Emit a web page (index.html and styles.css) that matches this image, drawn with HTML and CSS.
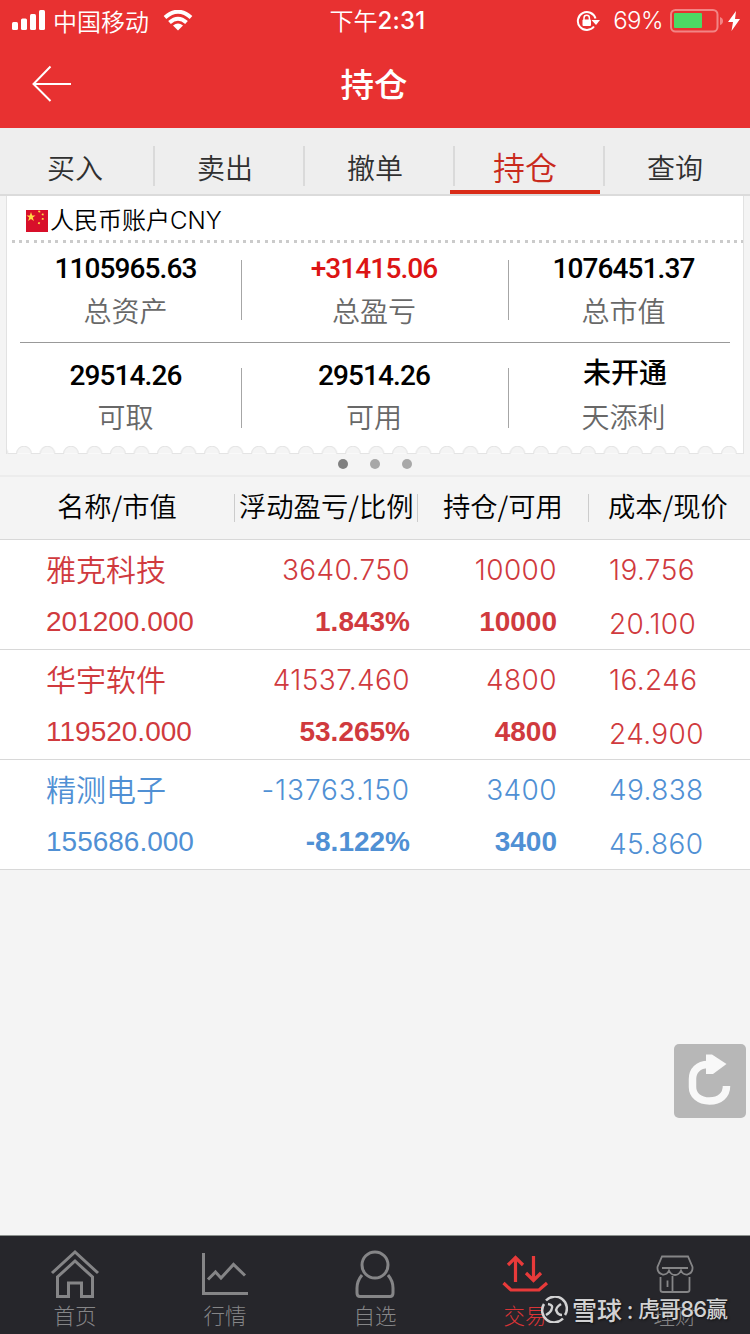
FILE: index.html
```html
<!DOCTYPE html>
<html lang="zh-CN">
<head>
<meta charset="utf-8">
<title>持仓</title>
<link rel="stylesheet" href="styles.css">
</head>
<body>
<div class="app">
  <header class="top">
    <div class="status">
      <div class="status-left">
        <svg width="34" height="22" viewBox="0 0 34 22" fill="#fff"><rect x="0" y="12" width="6" height="8" rx="1.5"/><rect x="9" y="8.500" width="6" height="11.500" rx="1.500"/><rect x="18" y="4" width="6" height="16" rx="1.500"/><rect x="27" y="0" width="6" height="20" rx="1.500"/></svg>
        <span class="carrier">中国移动</span>
        <svg width="30" height="22" viewBox="0 0 30 22"><g fill="none" stroke="#fff" stroke-width="4"><path d="M2 7.500Q15-4 28 7.500"/><path d="M6.500 12.500Q15 5 23.500 12.500"/></g><path d="M10 15.500Q15 11.500 20 15.500L15 20.500Z" fill="#fff"/></svg>
      </div>
      <div class="clock">下午<b>2:31</b></div>
      <div class="status-right">
        <svg width="24" height="22" viewBox="0 0 24 22"><path d="M18 16.500A9 9 0 1 1 19.500 8.500" fill="none" stroke="#fff" stroke-width="2"/><path d="M15.500 10H24L20 15Z" fill="#fff"/><rect x="6.500" y="9.500" width="8.500" height="6.500" rx="1" fill="#fff"/><path d="M8 10V8a2.700 2.700 0 0 1 5.400 0v2" fill="none" stroke="#fff" stroke-width="1.500"/></svg>
        <span class="percent">69%</span>
        <svg width="54" height="24" viewBox="0 0 54 24"><rect x="1" y="1" width="46.500" height="21.500" rx="4.500" fill="none" stroke="#f28585" stroke-width="2"/><rect x="4" y="4" width="28" height="15" rx="1" fill="#4cd964"/><path d="M50 8q3 1 3 4t-3 4z" fill="#f28585"/></svg>
        <svg class="bolt" width="12" height="20" viewBox="0 0 12 20"><path d="M8 0L0 11H5L3.500 20L12 8H7Z" fill="#fff"/></svg>
      </div>
    </div>
    <div class="title-bar">
      <svg class="back" width="40" height="38" viewBox="0 0 40 38"><path d="M18.500 1.500L1.500 19L18.500 36M1.500 19H39" fill="none" stroke="#fff" stroke-width="2"/></svg>
      <h1>持仓</h1>
    </div>
  </header>

  <nav class="tabs">
    <a class="tab"><span>买入</span></a>
    <a class="tab"><span>卖出</span></a>
    <a class="tab"><span>撤单</span></a>
    <a class="tab active"><span>持仓</span></a>
    <a class="tab"><span>查询</span></a>
  </nav>

  <section class="account">
    <div class="card">
      <div class="account-name">
        <svg width="22" height="22" viewBox="0 0 22 22"><rect width="22" height="22" fill="#d80f2a"/><path fill="#ffda44" d="M5 2L6.200 5.500H9.500L6.800 7.600L7.900 11L5 9L2.100 11L3.200 7.600L.5 5.500H3.800ZM12.500.5l1.500.2.500 1.500-1.500.3-1-.9zM16 3.500l1.800.2-.4 1.800-1.800-.4zM16 8l1.800.2-.4 1.900-1.800-.5zM12.500 12l1.700.5-.7 1.800-1.700-.5z"/></svg>
        <span>人民币账户CNY</span>
      </div>
      <div class="dots-line"></div>
      <div class="stats">
        <div class="stat first"><div class="num">1105965.63</div><div class="label">总资产</div></div>
        <div class="stat middle"><div class="num gain">+31415.06</div><div class="label">总盈亏</div></div>
        <div class="stat last"><div class="num">1076451.37</div><div class="label">总市值</div></div>
      </div>
      <div class="stats lower">
        <div class="stat first"><div class="num">29514.26</div><div class="label">可取</div></div>
        <div class="stat middle"><div class="num">29514.26</div><div class="label">可用</div></div>
        <div class="stat last"><div class="num cjk">未开通</div><div class="label">天添利</div></div>
      </div>
      <svg class="scallops" width="736" height="8" viewBox="0 0 736 8"><defs><pattern id="scallop" x="5.200" width="23.500" height="8" patternUnits="userSpaceOnUse"><path d="M0 7.500H4.500A7.200 7.200 0 0 1 19 7.500H23.500" fill="#f4f4f4" stroke="#e4e4e4"/></pattern></defs><rect width="736" height="8" fill="url(#scallop)"/></svg>
    </div>
    <div class="pager"><i class="on"></i><i></i><i></i></div>
  </section>

  <section class="holdings">
    <div class="head">
      <span class="h1c">名称/市值</span><span class="h2c">浮动盈亏/比例</span><span class="h3c">持仓/可用</span><span class="h4c">成本/现价</span>
    </div>
    <div class="row up">
      <div class="c1"><span class="name">雅克科技</span><span class="helv">201200.000</span></div>
      <div class="c2"><span class="thin">3640.750</span><b>1.843%</b></div>
      <div class="c3"><span class="thin">10000</span><b>10000</b></div>
      <div class="c4"><span class="thin">19.756</span><span class="thin second">20.100</span></div>
    </div>
    <div class="row up">
      <div class="c1"><span class="name">华宇软件</span><span class="helv">119520.000</span></div>
      <div class="c2"><span class="thin">41537.460</span><b>53.265%</b></div>
      <div class="c3"><span class="thin">4800</span><b>4800</b></div>
      <div class="c4"><span class="thin">16.246</span><span class="thin second">24.900</span></div>
    </div>
    <div class="row down">
      <div class="c1"><span class="name">精测电子</span><span class="helv">155686.000</span></div>
      <div class="c2"><span class="thin wide">-13763.150</span><b>-8.122%</b></div>
      <div class="c3"><span class="thin">3400</span><b>3400</b></div>
      <div class="c4"><span class="thin">49.838</span><span class="thin second">45.860</span></div>
    </div>
  </section>

  <button class="refresh" aria-label="刷新">
    <svg width="72" height="74" viewBox="0 0 72 74"><path d="M34 20.500C24 20.500 18.500 27 18.500 35V43C18.500 51 25 57 35.500 57C46 57 52.500 51 52.500 42" fill="none" stroke="#f8f8f8" stroke-width="7.500"/><path d="M32 10.500H38L52.500 20L39 30H32Z" fill="#f8f8f8"/></svg>
  </button>

  <nav class="bottom">
    <a class="item"><svg width="50" height="50" viewBox="0 0 50 50"><g fill="none" stroke="#858587" stroke-width="3"><path d="M2 24L25 3L48 24"/><path d="M7.500 47.500V28L25 12L42.500 28V47.500H31.500V34H18.500V47.500Z"/></g></svg><span>首页</span></a>
    <a class="item"><svg width="50" height="50" viewBox="0 0 50 50"><g fill="none" stroke="#858587" stroke-width="3"><path d="M3.500 4V44.500H48"/><path d="M8 30.500L15.500 23L21 29L33.500 15.500L45 26.500"/></g></svg><span>行情</span></a>
    <a class="item"><svg width="50" height="50" viewBox="0 0 50 50"><g fill="none" stroke="#858587" stroke-width="3"><circle cx="25" cy="16" r="13"/><path d="M12 26Q7 32 7 39V44Q7 47.500 10 47.500H40Q43 47.500 43 44V39Q43 32 38 26"/></g></svg><span>自选</span></a>
    <a class="item current"><svg width="50" height="50" viewBox="0 0 50 50"><g fill="none" stroke="#e83a3a" stroke-width="3.200"><path d="M15.500 33V8M8 16L15.500 8.500L23 16M33.500 7V32M26 24L33.500 31.500L41 24"/><path d="M3.500 34L11 41H39L47 34"/></g></svg><span>交易</span></a>
    <a class="item"><svg width="50" height="50" viewBox="0 0 50 50"><g fill="none" stroke="#858587" stroke-width="1.800"><path d="M12 7.500H38L42.500 18Q43 24 37.500 25.500Q33 26 31 21.500Q29 26 25 26Q21 26 19 21.500Q17 26 12.500 25.500Q7 24 7.500 18ZM12 19H38M10.500 28V41Q10.500 43 13 43H37Q39.500 43 39.500 41V28M22.500 27V43M17.500 31.500V38"/></g></svg><span>理财</span></a>
  </nav>

  <div class="watermark">
    <svg width="27" height="27" viewBox="0 0 27 27"><g fill="none" stroke="#d2d2d3" stroke-width="2.500"><path d="M5 4.500A12 12 0 0 1 24 19M22 22.500A12 12 0 0 1 3 8"/><path d="M7 8Q13 9 10.500 13.500Q10 16 5 19M20 8Q14 12 15.500 15Q17 19 21 19"/></g></svg>
    <span class="brand">雪球</span><span class="colon">:</span><span class="author">虎哥86赢</span>
  </div>
</div>
</body>
</html>
```
FILE: styles.css
```css
* { box-sizing: border-box; }
body { margin: 0; background: #f4f4f4; font-family: "Noto Sans CJK SC", sans-serif; }
svg { display: block; flex: none; }
.app { position: relative; width: 750px; height: 1334px; display: flex; flex-direction: column; overflow: hidden; }

.top { height: 128px; background: #e83131; color: #fff; flex: none; }
.status { display: grid; grid-template-columns: 1fr auto 1fr; height: 40px; align-items: center; font-size: 24px; font-weight: 350; padding: 0 10px 0 12px; line-height: 38px; }
.status-left, .status-right { display: flex; align-items: center; }
.carrier { margin: 0 14px 0 7px; }
.clock { padding-left: 3px; display: flex; }
.clock b { font: 500 24px/40px Inter, sans-serif; letter-spacing: .2px; }
.status-right { justify-content: flex-end; }
.percent { font: 350 24px/40px Inter, sans-serif; margin: 1px 7px 0 13px; letter-spacing: -.5px; }
.bolt { margin-left: 4px; }
.title-bar { height: 88px; display: grid; grid-template-columns: 100px 1fr 100px; align-items: center; }
.back { margin-left: 32px; }
.title-bar h1 { margin: -2px 2px 0 0; font-size: 33.5px; line-height: 48px; font-weight: 500; text-align: center; }

.tabs { display: grid; grid-template-columns: repeat(5, 1fr); height: 68px; flex: none; background: #eee; border-bottom: 2px solid #dbdbdb; }
.tab { display: flex; align-items: center; height: 66px; padding: 12px 0 0; font-size: 28px; font-weight: 350; color: #303030; line-height: 50px; justify-content: center; }
.tab:not(:first-child) { background: linear-gradient(#dadada, #dadada) 3px 18px / 2px 40px no-repeat; }
.tab.active { border-bottom: 4px solid #d92c18; color: #c92a1d; font-size: 32px; padding-top: 14px; }

.account { height: 281px; flex: none; border-bottom: 2px solid #ececec; }
.card { width: 738px; height: 258px; margin: 0 auto; background: #fff; border: 1px solid #e2e2e2; border-width: 0 1px; display: flex; flex-direction: column; }
.account-name { height: 44px; display: flex; align-items: center; padding: 5px 0 0 19px; gap: 2px; font-size: 24px; line-height: 36px; color: #000; }
.account-name span { font-family: Inter, "Noto Sans CJK SC", sans-serif; font-weight: 350; }
.dots-line { height: 3px; margin: 0 0 0 5px; background: repeating-linear-gradient(90deg, #cbcbcb 0 3px, #fff 3px 7.220px); flex: none; }
.stats { margin: 17px 13px 0; height: 83px; display: flex; border-bottom: 1px solid #999; flex: none; }
.stats.lower { margin-top: 25px; height: 60px; border: 0; }
.stat { height: 60px; text-align: center; }
.first { width: 222px; padding-right: 10px; border-right: 1px solid #a6a6a6; }
.middle { width: 267px; border-right: 1px solid #a6a6a6; padding-right: 2px; }
.last { flex: 1; padding-left: 8px; }
.num { height: 16px; line-height: 18px; font-family: Roboto, sans-serif; font-weight: 500; font-size: 28px; letter-spacing: -.9px; color: #000; }
.num.gain { color: #dc1414; }
.num.cjk { font-family: "Noto Sans CJK SC", sans-serif; letter-spacing: 0; line-height: 6px; padding-left: 3px; }
.label { margin-top: 26px; height: 18px; line-height: 16px; font-size: 28px; font-weight: 350; color: #686868; }
.lower .num { height: 14px; line-height: 15px; }
.lower .num.cjk { line-height: 7px; }
.scallops { margin: auto 0 0; }
.pager { display: flex; justify-content: center; gap: 22px; padding-top: 5px; }
.pager i { width: 10px; height: 10px; border-radius: 50%; background: #a8a8a8; }
.pager i.on { background: #808080; }

.holdings { flex: none; }
.head { display: grid; grid-template-columns: 234px 183px 171px 162px; height: 63px; border-bottom: 1px solid #d8d8d8; color: #000; font-size: 27.3px; line-height: 40px; padding-top: 8px; font-weight: 350; white-space: nowrap; }
.head span { background: linear-gradient(#ccc, #ccc) 0 9px / 1px 28px no-repeat; }
.head .h1c { padding-left: 57px; background: none; }
.h2c { padding-left: 5px; }
.h3c { padding-left: 26px; }
.h4c { padding-left: 20px; }
.row { display: grid; grid-template-columns: 210px 200px 147px 193px; height: 110px; background: #fff; border-bottom: 1px solid #d8d8d8; }
.row div { display: flex; flex-direction: column; padding-top: 10px; line-height: 40px; }
.row span, .row b { height: 40px; font-size: 28px; }
.row b, .row .helv, .row .second { margin-top: 12px; }
.row .second { margin-top: 14px; }
.up { color: #d03a3e; }
.down { color: #5090d4; }
.row .name { font-size: 30px; font-weight: 350; line-height: 36px; }
.c1 { padding-left: 46px; }
.c2, .c3 { text-align: right; }
.c4 { padding-left: 52px; }
.helv { font-family: "Liberation Sans", Arial, sans-serif; }
.row b { font-family: "Liberation Sans", Arial, sans-serif; font-weight: 700; }
.thin { font-family: Inter, sans-serif; font-weight: 300; letter-spacing: .4px; }
.wide { letter-spacing: .9px; }

.refresh { position: absolute; left: 674px; top: 1044px; width: 72px; height: 74px; border: 0; border-radius: 5px; padding: 0; background: #b7b7b7; }
.bottom { margin-top: auto; height: 99px; display: grid; grid-template-columns: repeat(5, 1fr); background: #26262b; border-top: 1px solid #8c918e; flex: none; }
.item { display: flex; flex-direction: column; align-items: center; padding-top: 13px; font-size: 21.5px; font-weight: 300; color: #858587; }
.item span { line-height: 31px; }
.item.current { color: #d93437; }
.watermark { position: absolute; left: 541px; top: 1293px; height: 32px; display: flex; align-items: center; color: #d2d2d3; font-size: 24px; line-height: 32px; text-shadow: 1px 1px 2px #111; white-space: nowrap; }
.brand { margin-left: 4px; font-weight: 500; font-size: 25px; }
.colon { width: 16px; text-align: center; }
.author { font-family: Inter, "Noto Sans CJK SC", sans-serif; font-weight: 500; font-size: 22px; letter-spacing: -.9px; }
```
